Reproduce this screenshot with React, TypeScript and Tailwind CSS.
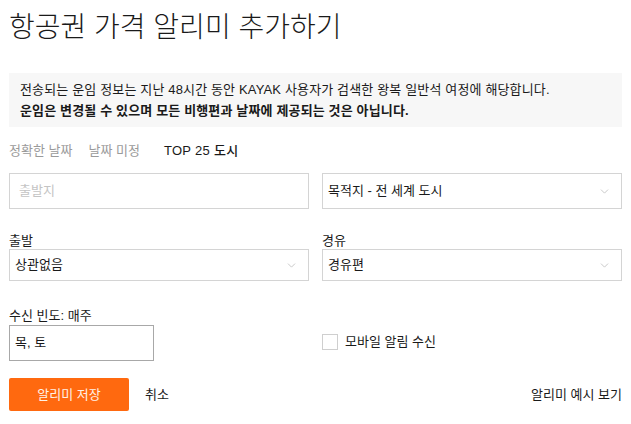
import { ChevronDown } from "lucide-react";

const font = "font-['Liberation_Sans','Noto_Sans_CJK_KR',sans-serif]";

const SelectBox = ({ value, tall }: { value: string; tall?: boolean }) => (
  <div
    className={`flex items-center justify-between border border-[#d4d4d4] bg-white pl-[5px] pr-[10px] ${
      tall ? "h-[36px]" : "h-[32px]"
    }`}
  >
    <span className="text-[13px] text-[#1a1a1a]">{value}</span>
    <ChevronDown size={13} strokeWidth={1.5} className="text-[#bdbdbd]" />
  </div>
);

const App = () => {
  return (
    <div className={`min-h-screen bg-white px-[9px] text-[#1a1a1a] ${font}`}>
      {/* Title */}
      <h1 className="pt-[9px] text-[28px] font-light leading-[38px]">항공권 가격 알리미 추가하기</h1>

      {/* Notice */}
      <div className="mt-[26px] bg-[#f7f7f7] px-[11px] py-[6px] text-[13px] leading-[21px] tracking-[0.15px]">
        <p>전송되는 운임 정보는 지난 48시간 동안 KAYAK 사용자가 검색한 왕복 일반석 여정에 해당합니다.</p>
        <p className="font-bold">운임은 변경될 수 있으며 모든 비행편과 날짜에 제공되는 것은 아닙니다.</p>
      </div>

      {/* Tabs */}
      <div className="mt-[14px] flex items-center text-[13px] leading-[20px]">
        <span className="text-[#9a9a9a]">정확한 날짜</span>
        <span className="ml-[16px] text-[#9a9a9a]">날짜 미정</span>
        <span className="ml-[24px] font-medium tracking-[0.3px] text-[#1a1a1a]">TOP 25 도시</span>
      </div>

      {/* Origin / destination */}
      <div className="mt-[12px] grid grid-cols-2 gap-[13px]">
        <div className="flex h-[36px] items-center border border-[#d4d4d4] px-[9px] text-[13px] text-[#c4c4c4]">
          출발지
        </div>
        <SelectBox value="목적지 - 전 세계 도시" tall />
      </div>

      {/* Depart / stops */}
      <div className="mt-[23px] grid grid-cols-2 gap-[13px]">
        <div>
          <label className="block text-[13px] leading-[17px]">출발</label>
          <SelectBox value="상관없음" />
        </div>
        <div>
          <label className="block text-[13px] leading-[17px]">경유</label>
          <SelectBox value="경유편" />
        </div>
      </div>

      {/* Frequency / mobile */}
      <div className="mt-[26px] grid grid-cols-2 gap-[13px]">
        <div>
          <label className="block text-[13px] leading-[17px]">수신 빈도: 매주</label>
          <div className="mt-[1px] flex h-[36px] w-[145px] items-center border border-[#a8a8a8] px-[5px] text-[13px]">
            목, 토
          </div>
        </div>
        <div className="flex items-center pt-[15px]">
          <span className="h-[16px] w-[16px] border border-[#cfcfcf] bg-white" />
          <span className="ml-[7px] text-[13px]">모바일 알림 수신</span>
        </div>
      </div>

      {/* Actions */}
      <div className="mt-[17px] flex items-center">
        <button className="h-[33px] w-[120px] rounded-[2px] bg-[#ff690f] text-[13px] text-[#fff1e6]">
          알리미 저장
        </button>
        <button className="ml-[16px] text-[13px]">취소</button>
        <a className="ml-auto text-[13px]">알리미 예시 보기</a>
      </div>
    </div>
  );
};

export default App;
